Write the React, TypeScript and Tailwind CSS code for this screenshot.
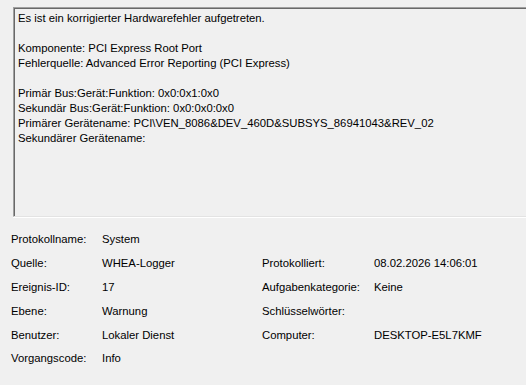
export default function App() {
  const lines = [
    "Es ist ein korrigierter Hardwarefehler aufgetreten.",
    "",
    "Komponente: PCI Express Root Port",
    "Fehlerquelle: Advanced Error Reporting (PCI Express)",
    "",
    "Primär Bus:Gerät:Funktion: 0x0:0x1:0x0",
    "Sekundär Bus:Gerät:Funktion: 0x0:0x0:0x0",
    "Primärer Gerätename: PCI\\VEN_8086&DEV_460D&SUBSYS_86941043&REV_02",
    "Sekundärer Gerätename:",
  ];

  const rows: [string, string, string, string][] = [
    ["Quelle:", "WHEA-Logger", "Protokolliert:", "08.02.2026 14:06:01"],
    ["Ereignis-ID:", "17", "Aufgabenkategorie:", "Keine"],
    ["Ebene:", "Warnung", "Schlüsselwörter:", ""],
    ["Benutzer:", "Lokaler Dienst", "Computer:", "DESKTOP-E5L7KMF"],
    ["Vorgangscode:", "Info", "", ""],
  ];

  return (
    <div
      className="w-[526px] h-[385px] overflow-hidden bg-[#f0f0f0] text-[11.3px] text-black"
      style={{ fontFamily: '"Liberation Sans", Arial, sans-serif' }}
    >
      <div className="pt-[7px] pl-[13px]">
        {/* read-only text box, runs past the right edge */}
        <div className="w-[530px] h-[210px] border-t border-l border-t-[#a0a0a0] border-l-[#a0a0a0] border-b border-b-[#e3e3e3]">
          <div className="h-full border-t border-l border-t-[#696969] border-l-[#696969] pt-[2px] pl-[3px]">
            {lines.map((l, i) => (
              <div key={i} className="h-[15px] leading-[15px] whitespace-pre">
                {l}
              </div>
            ))}
          </div>
        </div>
        <div className="w-[530px] h-px bg-white" />
      </div>

      <div className="pl-[11px] pt-[10px]">
        <div className="flex h-[23.8px] items-center">
          <div className="w-[91px]">Protokollname:</div>
          <div>System</div>
        </div>
        {rows.map((r, i) => (
          <div key={i} className="flex h-[23.8px] items-center">
            <div className="w-[91px]">{r[0]}</div>
            <div className="w-[160px]">{r[1]}</div>
            <div className="w-[112px]">{r[2]}</div>
            <div>{r[3]}</div>
          </div>
        ))}
      </div>
    </div>
  );
}
